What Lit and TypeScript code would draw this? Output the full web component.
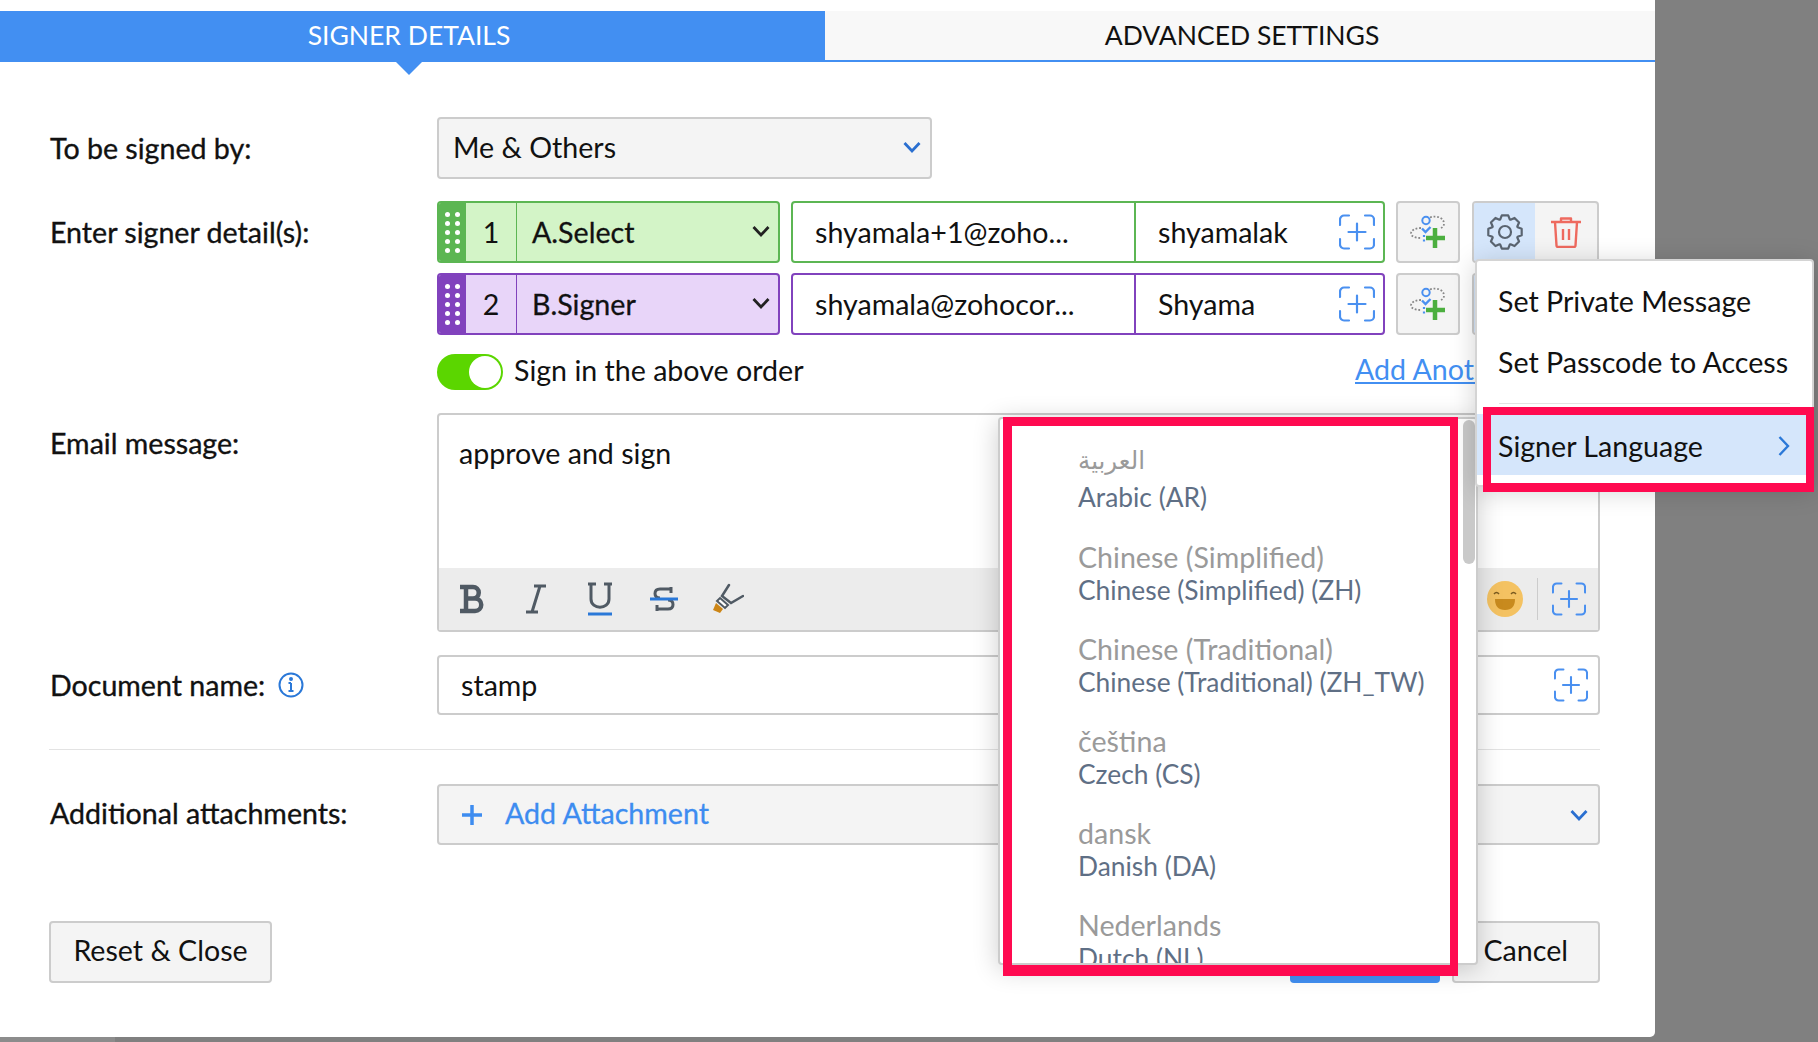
import { LitElement, html, css } from "lit";
import { customElement } from "lit/decorators.js";

const chevron = (color: string, w = 20) => html`<svg class="chev" width=${w} height="14" viewBox="0 0 20 14" fill="none"><path d="M2.500 3 10 11 17.500 3" stroke=${color} stroke-width="2.800"/></svg>`;

const focusPlus = (size = 36) => html`<svg width=${size} height=${size} viewBox="0 0 36 36" fill="none" stroke="#4a90f0" stroke-width="2.200" stroke-linecap="round">
  <path d="M10 1.500H5a4 4 0 0 0-4 4V11M26 1.500h5a4 4 0 0 1 4 4V11M10 34.500H5a4 4 0 0 1-4-4V25M26 34.500h5a4 4 0 0 0 4-4V25M18 9.500v17M9.500 18h17"/></svg>`;

const addSigner = html`<svg width="36" height="34" viewBox="0 0 36 34" fill="none">
  <path d="M20 2.500C27 0 34 3 34 8.500c0 2-1 3.500-3 4.500" stroke="#888" stroke-width="1.800" stroke-dasharray="1.800 1.800"/>
  <path d="M11 13C4 13 1 16 1 18.500S5 23 11 23" stroke="#888" stroke-width="1.800" stroke-dasharray="1.800 1.800"/>
  <circle cx="16" cy="5.500" r="3.700" fill="#f4f4f4" stroke="#4a90f0" stroke-width="2"/>
  <path d="M12 13.500l3.500 3.500 5-5" stroke="#4a90f0" stroke-width="2.400"/>
  <path d="M14 20v9" stroke="#4a90f0" stroke-width="2.200" stroke-dasharray="2 2.500"/>
  <path d="M25 13v20M16 23h19" stroke="#4caf3f" stroke-width="4.500"/></svg>`;

function gearPath() {
  const pts: string[] = [];
  const cx = 18, cy = 18;
  for (let i = 0; i < 8; i++) {
    const a = (i * Math.PI) / 4 - Math.PI / 2;
    const seq: [number, number][] = [[13.5, -0.36], [17, -0.19], [17, 0.19], [13.5, 0.36]];
    for (const [r, d] of seq) pts.push(`${(cx + r * Math.cos(a + d)).toFixed(2)} ${(cy + r * Math.sin(a + d)).toFixed(2)}`);
  }
  return "M" + pts.join("L") + "Z";
}
const gear = html`<svg width="36" height="36" viewBox="0 0 36 36" fill="none" stroke="#5a6470" stroke-width="2.200" stroke-linejoin="round">
  <path d=${gearPath()}/><circle cx="18" cy="18" r="6"/></svg>`;

const trash = html`<svg width="32" height="32" viewBox="0 0 32 32" fill="none" stroke="#ee6a5f" stroke-width="2.400" stroke-linejoin="round">
  <path d="M1 6h30M11 6V2.500h10V6M5 6l1.500 23.500a1.500 1.500 0 0 0 1.500 1.500h16a1.500 1.500 0 0 0 1.500-1.500L27 6M13 13v11M19 13v11"/></svg>`;

const SignerRow = (n: number, cls: string, role: string, email: string, name: string) => html`
  <div class="signer ${cls}">
    <div class="roleBox">
      <div class="drag">${[0, 1, 2, 3, 4, 5, 6, 7, 8, 9].map(() => html`<i></i>`)}</div>
      <div class="num">${n}</div>
      <div class="role"><span>${role}</span>${chevron("#222")}</div>
    </div>
    <div class="contact">
      <div class="email"><span class="up">${email}</span></div>
      <div class="name"><span class="up">${name}</span>${focusPlus()}</div>
    </div>
    <div class="iconBtn add">${addSigner}</div>
    <div class="gearGroup">
      <div class="gear">${gear}</div>
      <div class="trash">${trash}</div>
    </div>
  </div>`;

const langs = [
  ["العربية", "Arabic (AR)"],
  ["Chinese (Simplified)", "Chinese (Simplified) (ZH)"],
  ["Chinese (Traditional)", "Chinese (Traditional) (ZH_TW)"],
  ["čeština", "Czech (CS)"],
  ["dansk", "Danish (DA)"],
  ["Nederlands", "Dutch (NL)"],
];

@customElement("app-root")
export class AppRoot extends LitElement {
  static styles = css`
    :host { display: block; position: relative; width: 1818px; height: 1042px; overflow: hidden; background: #808080;
      font-family: "Lato", "DejaVu Sans", sans-serif; font-size: 28.6px; line-height: 34px; color: #111; }
    * { box-sizing: border-box; }
    .modal { width: 1655px; height: 1037px; background: #fff; padding-top: 11px; border-bottom-right-radius: 5px; }
    .tabs { display: flex; height: 51px; font-size: 26.5px; }
    .tab { flex: 1; display: flex; align-items: center; justify-content: center; position: relative; padding-bottom: 3px; }
    .tab.on { flex: 0 0 825px; background: #428ff2; color: #fff; padding-right: 7px; }
    .tab.on::after { content: ""; position: absolute; left: 396px; top: 51px; border: 13px solid transparent; border-top-color: #428ff2; border-bottom: 0; }
    .tab.off { background: #f8f8f8; border-bottom: 2px solid #428ff2; height: 51px; color: #111; padding-left: 4px; padding-bottom: 1px; }
    .body { padding: 55px 55px 0 49px; }
    .row { display: grid; grid-template-columns: 388px 1fr; align-items: center; }
    .lab { -webkit-text-stroke: .35px #111; padding-left: 1px; }
    .box { height: 62px; background: #f4f4f4; border: 2px solid #ccc; border-radius: 4px; display: flex; align-items: center; }
    .select { width: 495px; padding: 0 8px 2px 14px; justify-content: space-between; }
    .signers { margin-top: 22px; align-items: start; }
    .signerLab { height: 62px; display: flex; align-items: center; }
    .list { display: flex; flex-direction: column; gap: 10px; }
    .signer { display: flex; height: 62px; }
    .roleBox { width: 343px; display: flex; border: 2px solid var(--c); border-radius: 4px; background: var(--b); overflow: hidden; -webkit-text-stroke: .3px #111; }
    .green { --c: #5cb653; --b: #d3f4c7; }
    .purple { --c: #8142bd; --b: #e8d5f9; }
    .drag { width: 27px; background: var(--c); display: grid; grid-template-columns: 5px 5px; column-gap: 5px; row-gap: 4px; align-content: center; justify-content: center; }
    .drag i { width: 5px; height: 5px; border-radius: 50%; background: #fff; }
    .num { width: 51px; display: flex; align-items: center; justify-content: center; border-right: 1.500px solid var(--c); -webkit-text-stroke: 0; }
    .role { flex: 1; display: flex; align-items: center; justify-content: space-between; padding: 0 7px 0 15px; }
    .role .chev { margin-bottom: 2px; }
    .contact { margin-left: 11px; width: 594px; display: flex; border: 2px solid var(--c); border-radius: 4px; }
    .email { width: 343px; border-right: 2px solid var(--c); padding-left: 22px; display: flex; align-items: center; }
    .name { flex: 1; display: flex; align-items: center; justify-content: space-between; padding: 0 8px 0 22px; }
    .up { padding-bottom: 1px; }
    .iconBtn { margin-left: 11px; width: 64px; background: #f4f4f4; border: 2px solid #ccc; border-radius: 4px; display: flex; align-items: center; justify-content: center; }
    .gearGroup { margin-left: 12px; width: 127px; display: flex; background: #f4f4f4; border: 2px solid #ccc; border-radius: 4px; overflow: hidden; }
    .gear { width: 61px; background: #d5e6fb; display: flex; align-items: center; justify-content: center; }
    .trash { flex: 1; display: flex; align-items: center; justify-content: center; }
    .order { margin-top: 19px; height: 36px; }
    .orderIn { display: flex; align-items: center; height: 36px; }
    .orderLeft { flex: 0 0 918px; display: flex; align-items: center; height: 36px; }
    .toggle { width: 66px; height: 36px; border-radius: 18px; background: #5bd600; position: relative; margin-right: 11px; flex: none; }
    .toggle::after { content: ""; position: absolute; right: 2px; top: 2px; width: 32px; height: 32px; border-radius: 50%; background: #fff; }
    .orderText { line-height: 28px; padding-bottom: 4px; }
    .addLink { color: #428ff2; text-decoration: underline; white-space: nowrap; line-height: 28px; padding-bottom: 6px; }
    .msg { margin-top: 23px; align-items: start; }
    .msgLab { padding-top: 13px; }
    .editor { height: 219px; border: 2px solid #ccc; border-radius: 4px; display: flex; flex-direction: column; }
    .editText { flex: 1; padding: 21px 20px; }
    .toolbar { height: 62px; background: #ececec; display: flex; align-items: center; padding-left: 1px; position: relative; }
    .toolbar svg { display: block; }
    .tools { display: flex; align-items: center; }
    .tool { width: 64px; display: flex; justify-content: center; }
    .tright { margin-left: auto; display: flex; align-items: center; padding-right: 12px; }
    .emoji { width: 36px; height: 36px; border-radius: 50%; background: #f4c262; position: relative; margin-right: 14px; display: flex; justify-content: center; margin-left: -2px; }
    .emoji svg { display: block; }
    .sep { width: 1px; height: 42px; background: #ccc; margin-right: 14px; }
    .docRow { margin-top: 23px; }
    .docLab { display: flex; align-items: center; gap: 13px; }
    .doc { height: 60px; border: 2px solid #ccc; border-radius: 4px; display: flex; align-items: center; justify-content: space-between; padding: 0 10px 0 22px; }
    .divider { height: 1px; background: #e3e3e3; margin: 34px 0; }
    .attLab { padding-bottom: 4px; }
    .attach { height: 61px; padding: 0 9px 0 21px; }
    .attach .link { color: #3d8cf0; -webkit-text-stroke: .3px #3d8cf0; margin-left: 21px; padding-bottom: 4px; }
    .attach .chev { margin-left: auto; }
    .footer { margin-top: 76px; display: flex; align-items: center; }
    .btn { height: 62px; display: flex; align-items: center; justify-content: center; border-radius: 4px; padding-bottom: 5px; }
    .reset { width: 223px; }
    .send { margin-left: auto; width: 150px; background: #428ff2; }
    .cancel { margin-left: 12px; width: 148px; justify-content: flex-end; padding-right: 30px; padding-bottom: 5px; }

    .menu { position: absolute; left: 1475px; top: 259px; width: 339px; height: 228px; background: #fff; border: 2px solid #d4d4d4; border-radius: 4px; box-shadow: 0 4px 26px rgba(0,0,0,.18); padding-top: 10px; }
    .mi { height: 61px; display: flex; align-items: center; padding: 0 21px 1px 21px; justify-content: space-between; }
    .msep { height: 1px; background: #e3e3e3; margin: 10px 22px 10px 22px; }
    .mi.active { background: #d5e6fb; padding-bottom: 0; padding-top: 2px; }
    .drop { position: absolute; left: 998px; top: 417px; width: 480px; height: 548px; background: #fff; border: 2px solid #ccc; border-radius: 4px; box-shadow: 0 4px 26px rgba(0,0,0,.2); overflow: hidden; padding: 22px 0 0 78px; font-size: 26.35px; }
    .thumb { position: absolute; right: 1px; top: 1px; width: 12px; height: 144px; background: #c9c9c9; border-radius: 6px; }
    .item { height: 92px; white-space: nowrap; }
    .item.first { height: 100px; }
    .nat, .sub { display: block; height: 33px; line-height: 33px; }
    .first .nat { height: 38px; line-height: 38px; font-size: 24.5px; margin-bottom: 2px; }
    .nat { color: #9a9a9a; font-size: 28.6px; }
    .sub { color: #5f6f85; }
    .red { position: absolute; border-style: solid; border-color: #ff0a50; pointer-events: none; }
    .red.a { left: 1003px; top: 417px; width: 455px; height: 559px; border-width: 9px 8px 11px 9px; }
    .red.b { left: 1483px; top: 407px; width: 331px; height: 85px; border-width: 8px 8px 9px 8px; }
    .hatch { position: absolute; left: 0; top: 1037px; width: 115px; height: 5px; background: #8c8c8c; }
  `;

  render() {
    return html`
      <div class="modal">
        <div class="tabs">
          <div class="tab on">SIGNER DETAILS</div>
          <div class="tab off">ADVANCED SETTINGS</div>
        </div>
        <div class="body">
          <div class="row">
            <div class="lab">To be signed by:</div>
            <div class="box select"><span>Me &amp; Others</span>${chevron("#2a6fd0")}</div>
          </div>
          <div class="row signers">
            <div class="lab signerLab">Enter signer detail(s):</div>
            <div class="list">
              ${SignerRow(1, "green", "A.Select", "shyamala+1@zoho...", "shyamalak")}
              ${SignerRow(2, "purple", "B.Signer", "shyamala@zohocor...", "Shyama")}
            </div>
          </div>
          <div class="row order">
            <div></div>
            <div class="orderIn">
              <div class="orderLeft"><div class="toggle"></div><span class="orderText">Sign in the above order</span></div>
              <span class="addLink">Add Another</span>
            </div>
          </div>
          <div class="row msg">
            <div class="lab msgLab">Email message:</div>
            <div class="editor">
              <div class="editText">approve and sign</div>
              <div class="toolbar">
                <div class="tools">
                  <div class="tool"><svg width="26" height="30" viewBox="0 0 26 30" fill="none" stroke="#505a64" stroke-width="4.500"><path d="M1 3h13a5.500 5.500 0 0 1 0 11.500H7M7 14.500h9a6 6 0 0 1 0 12.500H1M7 3v24"/></svg></div>
                  <div class="tool"><svg width="24" height="30" viewBox="0 0 24 30" fill="none" stroke="#505a64" stroke-width="3"><path d="M10 2h12M2 28h12M16 2 8 28"/></svg></div>
                  <div class="tool"><svg width="26" height="34" viewBox="0 0 26 34" fill="none"><path d="M1 2h8M17 2h8M4 2v15c0 11 18 11 18 0V2" stroke="#505a64" stroke-width="3"/><path d="M1 32h24" stroke="#2a78d8" stroke-width="3"/></svg></div>
                  <div class="tool"><svg width="28" height="30" viewBox="0 0 28 30" fill="none"><path d="M21 9V3M21 5H10Q5 5 5 9.500T10 14M7 21v6M7 25h11q5 0 5-4.500T18 16" stroke="#505a64" stroke-width="3"/><path d="M0 15h28" stroke="#2a78d8" stroke-width="3"/></svg></div>
                  <div class="tool"><svg width="32" height="32" viewBox="0 0 32 32" fill="none"><path d="M17 2 10 13l9 7 12-7" stroke="#505a64" stroke-width="2.500" stroke-linecap="round"/><path d="M8 15l8 7-3 3-8-7z" fill="#fff" stroke="#505a64" stroke-width="2"/><path d="M4 20l7 6-3 4-7-3z" fill="#cc8515"/></svg></div>
                </div>
                <div class="tright">
                  <div class="emoji"><svg width="36" height="36" viewBox="0 0 36 36" fill="none"><path d="M7 13q2.500-3 5 0M24 13q2.500-3 5 0" stroke="#7a5a20" stroke-width="1.500"/><path d="M8 18h20q0 11-10 11T8 18z" fill="#c88a1e"/></svg></div>
                  <div class="sep"></div>${focusPlus(34)}
                </div>
              </div>
            </div>
          </div>
          <div class="row docRow">
            <div class="lab docLab">Document name:
              <svg width="26" height="26" viewBox="0 0 26 26" fill="none" stroke="#2a78d8" stroke-width="2"><circle cx="13" cy="13" r="11.500"/><path d="M13 11v8M10.500 19h5M10.500 11H13"/><circle cx="13" cy="7" r="1" fill="#2a78d8"/></svg>
            </div>
            <div class="doc"><span class="up">stamp</span>${focusPlus(34)}</div>
          </div>
          <div class="divider"></div>
          <div class="row">
            <div class="lab attLab">Additional attachments:</div>
            <div class="box attach">
              <svg width="24" height="24" viewBox="0 0 24 24" fill="none" stroke="#3d8cf0" stroke-width="3.500"><path d="M12 2v20M2 12h20"/></svg>
              <span class="link">Add Attachment</span>${chevron("#2a6fd0")}
            </div>
          </div>
          <div class="footer">
            <div class="box btn reset">Reset &amp; Close</div>
            <div class="btn send"></div>
            <div class="box btn cancel">Cancel</div>
          </div>
        </div>
      </div>
      <div class="hatch"></div>
      <div class="drop">
        ${langs.map(([a, b], i) => html`<div class="item ${i === 0 ? "first" : ""}"><span class="nat">${a}</span><span class="sub">${b}</span></div>`)}
        <div class="thumb"></div>
      </div>
      <div class="menu">
        <div class="mi">Set Private Message</div>
        <div class="mi">Set Passcode to Access</div>
        <div class="msep"></div>
        <div class="mi active"><span>Signer Language</span>
          <svg width="14" height="22" viewBox="0 0 14 22" fill="none"><path d="M2.500 2 11 11 2.500 20" stroke="#2a78d8" stroke-width="2.400"/></svg>
        </div>
      </div>
      <div class="red a"></div>
      <div class="red b"></div>
    `;
  }
}
